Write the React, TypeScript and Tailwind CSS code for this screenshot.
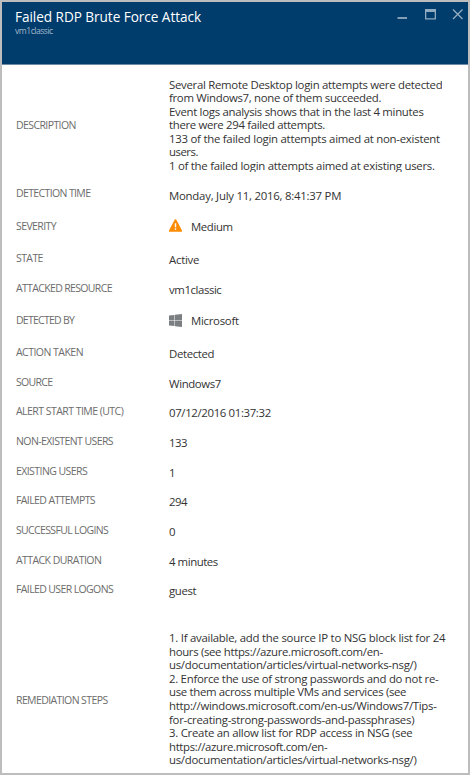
import React from "react";

type Field = {
  label: string;
  value: string;
  row: string;
  labelTracking: string;
  valueTracking: string;
  offset: string;
  icon?: "warning" | "windows";
};

const description = [
  { text: "Several Remote Desktop login attempts were detected", tracking: "tracking-[-0.29px]" },
  { text: "from Windows7, none of them succeeded.", tracking: "tracking-[-0.31px]" },
  { text: "Event logs analysis shows that in the last 4 minutes", tracking: "tracking-[-0.3px]" },
  { text: "there were 294 failed attempts.", tracking: "tracking-[-0.33px]" },
  { text: "133 of the failed login attempts aimed at non-existent", tracking: "tracking-[-0.25px]" },
  { text: "users.", tracking: "tracking-[-0.5px]" },
  { text: "1 of the failed login attempts aimed at existing users.", tracking: "tracking-[-0.265px]" },
];

const remediation = [
  { text: "1. If available, add the source IP to NSG block list for 24", tracking: "tracking-[-0.25px]" },
  { text: "hours (see https://azure.microsoft.com/en-", tracking: "tracking-[-0.33px]" },
  { text: "us/documentation/articles/virtual-networks-nsg/)", tracking: "tracking-[-0.27px]" },
  { text: "2. Enforce the use of strong passwords and do not re-", tracking: "tracking-[-0.28px]" },
  { text: "use them across multiple VMs and services (see", tracking: "tracking-[-0.32px]" },
  { text: "http://windows.microsoft.com/en-us/Windows7/Tips-", tracking: "tracking-[-0.29px]" },
  { text: "for-creating-strong-passwords-and-passphrases)", tracking: "tracking-[-0.27px]" },
  { text: "3. Create an allow list for RDP access in NSG (see", tracking: "tracking-[-0.27px]" },
  { text: "https://azure.microsoft.com/en-", tracking: "tracking-[-0.35px]" },
  { text: "us/documentation/articles/virtual-networks-nsg/)", tracking: "tracking-[-0.27px]" },
];

const fields: Field[] = [
  { label: "DETECTION TIME", value: "Monday, July 11, 2016, 8:41:37 PM", row: "h-[33px]", offset: "pt-[3px]", labelTracking: "tracking-[-0.63px]", valueTracking: "tracking-[-0.24px]" },
  { label: "SEVERITY", value: "Medium", row: "h-[32px]", offset: "pt-px", icon: "warning", labelTracking: "tracking-[-0.6px]", valueTracking: "tracking-[-0.4px]" },
  { label: "STATE", value: "Active", row: "h-[30px]", offset: "pt-[2px]", labelTracking: "tracking-[-0.6px]", valueTracking: "tracking-[-0.25px]" },
  { label: "ATTACKED RESOURCE", value: "vm1classic", row: "h-[32px]", offset: "pt-[2px]", labelTracking: "tracking-[-0.65px]", valueTracking: "tracking-[-0.42px]" },
  { label: "DETECTED BY", value: "Microsoft", row: "h-[32px]", offset: "pt-px", icon: "windows", labelTracking: "tracking-[-0.75px]", valueTracking: "tracking-[-0.28px]" },
  { label: "ACTION TAKEN", value: "Detected", row: "h-[30px]", offset: "pt-[2px]", labelTracking: "tracking-[-0.53px]", valueTracking: "tracking-[-0.35px]" },
  { label: "SOURCE", value: "Windows7", row: "h-[29px]", offset: "pt-[2px]", labelTracking: "tracking-[-0.7px]", valueTracking: "tracking-[-0.37px]" },
  { label: "ALERT START TIME (UTC)", value: "07/12/2016 01:37:32", row: "h-[30px]", offset: "pt-[2px]", labelTracking: "tracking-[-0.54px]", valueTracking: "tracking-[-0.35px]" },
  { label: "NON-EXISTENT USERS", value: "133", row: "h-[30px]", offset: "pt-[2px]", labelTracking: "tracking-[-0.58px]", valueTracking: "tracking-[-0.5px]" },
  { label: "EXISTING USERS", value: "1", row: "h-[29px]", offset: "pt-[2px]", labelTracking: "tracking-[-0.57px]", valueTracking: "tracking-normal" },
  { label: "FAILED ATTEMPTS", value: "294", row: "h-[30px]", offset: "pt-[2px]", labelTracking: "tracking-[-0.6px]", valueTracking: "tracking-[-0.5px]" },
  { label: "SUCCESSFUL LOGINS", value: "0", row: "h-[30px]", offset: "pt-[2px]", labelTracking: "tracking-[-0.65px]", valueTracking: "tracking-normal" },
  { label: "ATTACK DURATION", value: "4 minutes", row: "h-[29px]", offset: "pt-[2px]", labelTracking: "tracking-[-0.57px]", valueTracking: "tracking-[-0.44px]" },
  { label: "FAILED USER LOGONS", value: "guest", row: "h-[49px]", offset: "pt-[2px]", labelTracking: "tracking-[-0.62px]", valueTracking: "tracking-[-0.35px]" },
];

function WarningIcon() {
  return (
    <svg className="mr-[9px] -mt-[3px] h-[13px] w-[13px] shrink-0" viewBox="0 0 13 13">
      <path d="M6.5 1 12.4 12H.6Z" fill="#ff8c00" stroke="#ff8c00" strokeWidth="1.6" strokeLinejoin="round" />
      <path d="M5.8 4.3h1.4v4H5.8zM5.8 9.2h1.4v1.5H5.8z" fill="#fff" />
    </svg>
  );
}

function WindowsIcon() {
  return (
    <svg className="mr-[9px] -mt-[2px] h-[13px] w-[13px] shrink-0" viewBox="0 0 13 13">
      <path d="M0 1.6 5.5 .9V6.2H0ZM6 .8 13 0V6.2H6ZM0 6.8H5.5V12.1L0 11.4ZM6 6.8H13V13L6 12.2Z" fill="#7b7f82" />
    </svg>
  );
}

function Label({ text, tracking }: { text: string; tracking: string }) {
  return (
    <div className="w-[153px] shrink-0 text-[10.5px] leading-[14px] text-[#6c6c6c]">
      <span className={tracking}>{text}</span>
    </div>
  );
}

function Lines({ lines }: { lines: { text: string; tracking: string }[] }) {
  return (
    <div className="text-[11.4px] leading-[13.6px]">
      {lines.map((line, i) => (
        <div key={i} className={line.tracking}>{line.text}</div>
      ))}
    </div>
  );
}

export default function App() {
  return (
    <div className="h-[775px] w-[470px] overflow-hidden border-2 border-[#bdbdbd] bg-white font-['Open_Sans','Noto_Sans',sans-serif] whitespace-nowrap text-[#333]">
      <header className="flex h-[63px] justify-between border-b border-[#6f8ca6] bg-[#003c6c] pl-[13px]">
        <div className="pt-[5px]">
          <h1 className="text-[13.6px] leading-[19px] tracking-[-0.05px] text-white">Failed RDP Brute Force Attack</h1>
          <p className="text-[8.6px] leading-[11px] tracking-[-0.5px] text-[#a3b8ca]">vm1classic</p>
        </div>
        <svg className="h-[30px] w-[75px]" viewBox="393 2 75 30">
          <path d="M397.5 18h9.5" stroke="#91abc0" strokeWidth="1.8" />
          <path d="M425 9h11v10.5h-11z M426.3 12v6.2h8.4V12z" fill="#91abc0" fillRule="evenodd" />
          <path d="m453 9.5 9.5 9.5m0-9.5-9.5 9.5" stroke="#91abc0" strokeWidth="1.4" />
        </svg>
      </header>

      <main className="pt-[12.5px] pl-[14px]">
        <section className="flex h-[108.5px]">
          <div className="pt-[40.5px]">
            <Label text="DESCRIPTION" tracking="tracking-[-0.59px]" />
          </div>
          <div className="h-[94px] overflow-hidden">
            <Lines lines={description} />
          </div>
        </section>

        {fields.map((field) => (
          <section key={field.label} className={`flex ${field.row}`}>
            <Label text={field.label} tracking={field.labelTracking} />
            <div className={field.offset}>
              <div className="flex h-[14px] items-center text-[11.4px] leading-[14px]">
                {field.icon === "warning" && <WarningIcon />}
                {field.icon === "windows" && <WindowsIcon />}
                <span className={field.valueTracking}>{field.value}</span>
              </div>
            </div>
          </section>
        ))}

        <section className="flex h-[136px] overflow-hidden">
          <div className="pt-[61.5px]">
            <Label text="REMEDIATION STEPS" tracking="tracking-[-0.6px]" />
          </div>
          <Lines lines={remediation} />
        </section>
      </main>
    </div>
  );
}
